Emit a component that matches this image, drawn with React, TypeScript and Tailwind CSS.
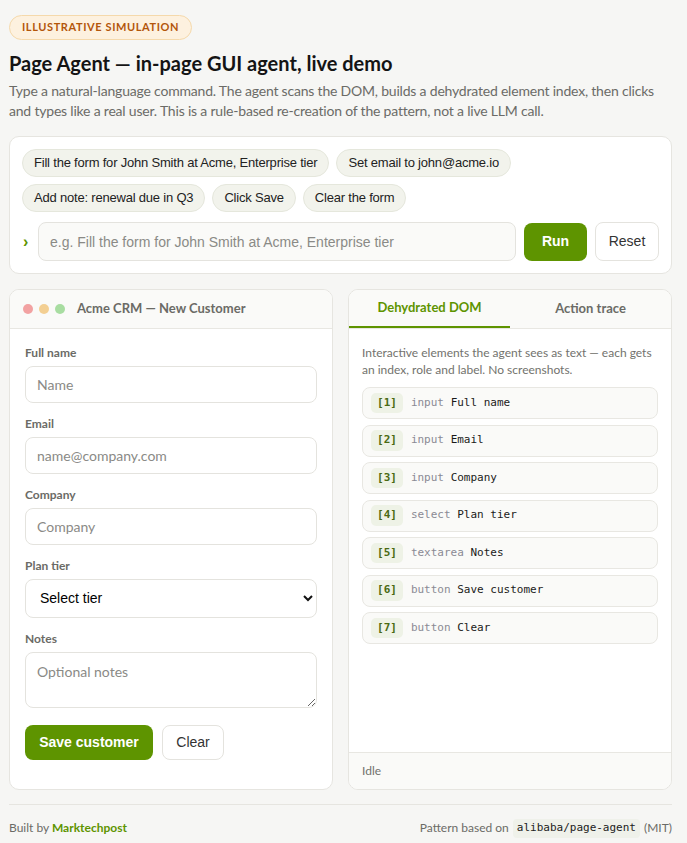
import React from "react";

const chips = [
  "Fill the form for John Smith at Acme, Enterprise tier",
  "Set email to john@acme.io",
  "Add note: renewal due in Q3",
  "Click Save",
  "Clear the form",
];

const nodes: [string, string][] = [
  ["input", "Full name"],
  ["input", "Email"],
  ["input", "Company"],
  ["select", "Plan tier"],
  ["textarea", "Notes"],
  ["button", "Save customer"],
  ["button", "Clear"],
];

const sans = "font-['Lato',sans-serif]";
const arial = "font-['Liberation_Sans',Arial,sans-serif]";
const mono = "font-['DejaVu_Sans_Mono',monospace]";

function Field({ label, children }: { label: string; children: React.ReactNode }) {
  return (
    <div className="flex flex-col gap-[5px]">
      <label className="text-[12px] font-bold text-[#6b6b66] leading-[16px]">{label}</label>
      {children}
    </div>
  );
}

const inputCls =
  "w-full h-[37px] rounded-[8px] border border-[#e4e3de] bg-white px-[11px] text-[14px] text-[#333] placeholder:text-[#8a8a86] outline-none";

export default function App() {
  return (
    <div className={`min-h-[843px] bg-[#f6f6f4] pl-[9px] pr-[15px] pt-[15px] text-[#1a1a1a] ${sans}`}>
      <div className="flex h-[25px] w-fit items-center rounded-full border border-[#f5d9ab] bg-[#fdf1df] px-[12px] text-[11px] font-bold tracking-[0.6px] text-[#b3560b]">
        ILLUSTRATIVE SIMULATION
      </div>
      <h1 className="mt-[10px] text-[20px] font-bold leading-[26px] text-[#141414]">
        Page Agent — in-page GUI agent, live demo
      </h1>
      <p className="mt-[5px] text-[14px] leading-[20px] tracking-[-0.2px] text-[#6b6b67]">
        Type a natural-language command. The agent scans the DOM, builds a dehydrated element index, then clicks
        and types like a real user. This is a rule-based re-creation of the pattern, not a live LLM call.
      </p>

      <div className="mt-[15px] rounded-[10px] border border-[#e6e5e0] bg-white px-[12px] pt-[12px] pb-[12px]">
        <div className="flex flex-wrap gap-[7px]">
          {chips.map((c) => (
            <button
              key={c}
              className={`h-[28px] rounded-full border border-[#e5e7dc] bg-[#f2f3ec] px-[11px] text-[13px] tracking-[-0.2px] text-[#222] ${arial}`}
            >
              {c}
            </button>
          ))}
        </div>
        <div className="mt-[10px] flex items-center gap-[8px]">
          <span className={`w-[8px] pl-[1px] text-[16px] font-bold leading-none text-[#5e9400] ${arial}`}>›</span>
          <input
            className={`h-[39px] flex-1 rounded-[8px] border border-[#e4e3de] bg-[#fafaf8] px-[11px] text-[14px] placeholder:text-[#8a8a86] outline-none ${arial}`}
            placeholder="e.g. Fill the form for John Smith at Acme, Enterprise tier"
          />
          <button className={`h-[38px] w-[63px] rounded-[8px] bg-[#5e9400] text-[14px] font-bold text-white ${arial}`}>
            Run
          </button>
          <button
            className={`h-[39px] w-[64px] rounded-[8px] border border-[#e4e3de] bg-white text-[14px] text-[#333] ${arial}`}
          >
            Reset
          </button>
        </div>
      </div>

      <div className="mt-[15px] grid grid-cols-2 gap-[15px]">
        <div className="flex h-[501px] flex-col overflow-hidden rounded-[10px] border border-[#e6e5e0] bg-white">
          <div className="flex h-[39px] items-center gap-[6px] border-b border-[#e8e7e2] bg-[#fafaf8] px-[13px]">
            <span className="h-[10px] w-[10px] rounded-full bg-[#f2a2a2]" />
            <span className="h-[10px] w-[10px] rounded-full bg-[#f3cf92]" />
            <span className="h-[10px] w-[10px] rounded-full bg-[#a8dda1]" />
            <span className="ml-[6px] text-[13px] font-bold text-[#6b6b66]">Acme CRM — New Customer</span>
          </div>
          <div className="flex flex-col gap-[13px] px-[15px] pt-[16px]">
            <Field label="Full name">
              <input className={inputCls} placeholder="Name" />
            </Field>
            <Field label="Email">
              <input className={inputCls} placeholder="name@company.com" />
            </Field>
            <Field label="Company">
              <input className={inputCls} placeholder="Company" />
            </Field>
            <Field label="Plan tier">
              <div className="relative">
                <select
                  className={`h-[39px] w-full appearance-none rounded-[8px] border border-[#e4e3de] bg-white px-[14px] text-[14px] text-black outline-none ${arial}`}
                >
                  <option>Select tier</option>
                </select>
                <svg
                  className="pointer-events-none absolute right-[4px] top-[15px]"
                  width="10"
                  height="8"
                  viewBox="0 0 10 8"
                >
                  <path d="M1 2l4 4 4-4" fill="none" stroke="#111" strokeWidth="2" />
                </svg>
              </div>
            </Field>
            <Field label="Notes">
              <textarea
                className="h-[56px] w-full resize-y rounded-[8px] border border-[#e4e3de] bg-white px-[11px] py-[9px] text-[14px] leading-[19px] placeholder:text-[#8a8a86] outline-none"
                placeholder="Optional notes"
              />
            </Field>
            <div className="mt-[4px] flex gap-[9px]">
              <button
                className={`h-[35px] w-[128px] rounded-[8px] bg-[#5e9400] text-[14px] font-bold text-white ${arial}`}
              >
                Save customer
              </button>
              <button
                className={`h-[35px] w-[62px] rounded-[8px] border border-[#e4e3de] bg-white text-[14px] text-[#333] ${arial}`}
              >
                Clear
              </button>
            </div>
          </div>
        </div>

        <div className="flex h-[501px] flex-col overflow-hidden rounded-[10px] border border-[#e6e5e0] bg-white">
          <div className="flex h-[39px] border-b border-[#e8e7e2] bg-[#fafaf8]">
            <div className="flex flex-1 items-center justify-center border-b-2 border-[#5e9400] text-[13px] font-bold text-[#5e9400]">
              Dehydrated DOM
            </div>
            <div className="flex flex-1 items-center justify-center text-[13px] font-bold text-[#6b6b66]">
              Action trace
            </div>
          </div>
          <div className="flex-1 px-[13px] pt-[15px]">
            <p className="text-[12px] leading-[17px] text-[#72726d]">
              Interactive elements the agent sees as text — each gets an index, role and label. No screenshots.
            </p>
            <div className="mt-[9px] flex flex-col gap-[5.5px]">
              {nodes.map(([role, label], i) => (
                <div
                  key={i}
                  className={`flex h-[32px] items-center gap-[8px] rounded-[8px] border border-[#e8e7e2] bg-[#fafaf8] px-[8px] text-[11px] ${mono}`}
                >
                  <span className="rounded-[5px] bg-[#eef2e6] px-[6px] py-[2px] font-semibold text-[#4a6a12]">
                    [{i + 1}]
                  </span>
                  <span>
                    <span className="text-[#8a8a94]">{role}</span> <span className="text-[#1a1a1a]">{label}</span>
                  </span>
                </div>
              ))}
            </div>
          </div>
          <div className="flex h-[37px] items-center border-t border-[#e8e7e2] bg-[#fafaf8] px-[13px] text-[12px] text-[#72726d]">
            Idle
          </div>
        </div>
      </div>

      <div className="mt-[14px] flex items-center justify-between border-t border-[#e6e5e0] pt-[14px] pb-[10px] text-[12px] text-[#6b6b66]">
        <span>
          Built by <span className="font-bold text-[#5e9400]">Marktechpost</span>
        </span>
        <span className="flex items-center gap-[4px]">
          Pattern based on
          <code className={`rounded-[4px] bg-[#eff1ea] px-[4px] py-[1px] text-[11px] text-[#222] ${mono}`}>
            alibaba/page-agent
          </code>
          (MIT)
        </span>
      </div>
    </div>
  );
}
